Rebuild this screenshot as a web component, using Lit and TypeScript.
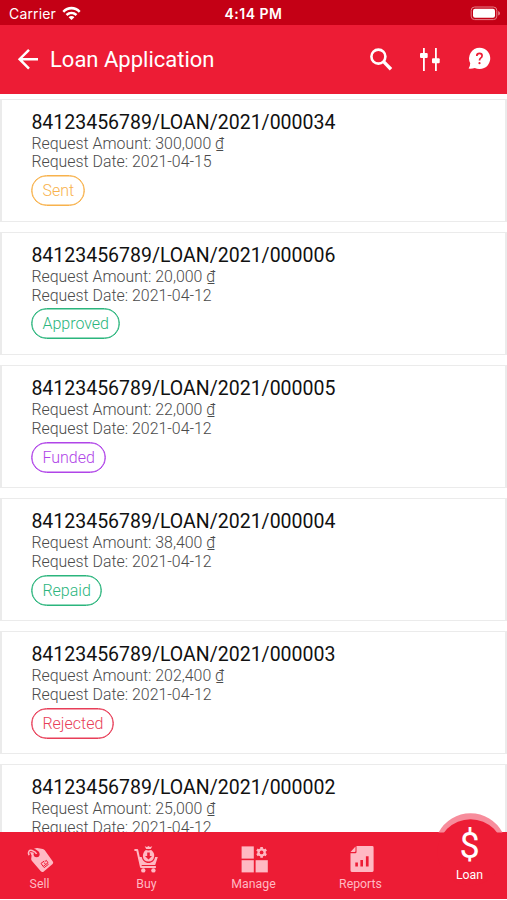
import { LitElement, html, svg, css } from "lit";
import { customElement, property } from "lit/decorators.js";
import { classMap } from "lit/directives/class-map.js";

type Status = "Sent" | "Approved" | "Funded" | "Repaid" | "Rejected";

interface Loan {
  id: string;
  amount: string;
  date: string;
  status: Status;
}

const loans: Loan[] = [
  { id: "84123456789/LOAN/2021/000034", amount: "300,000", date: "2021-04-15", status: "Sent" },
  { id: "84123456789/LOAN/2021/000006", amount: "20,000", date: "2021-04-12", status: "Approved" },
  { id: "84123456789/LOAN/2021/000005", amount: "22,000", date: "2021-04-12", status: "Funded" },
  { id: "84123456789/LOAN/2021/000004", amount: "38,400", date: "2021-04-12", status: "Repaid" },
  { id: "84123456789/LOAN/2021/000003", amount: "202,400", date: "2021-04-12", status: "Rejected" },
  { id: "84123456789/LOAN/2021/000002", amount: "25,000", date: "2021-04-12", status: "Repaid" },
];

const gearTeeth = [0, 60, 120].map(
  (a) => svg`<rect x="19.7" y="0.6" width="2.6" height="10.8" transform="rotate(${a} 21 6)" />`
);

const tabs = [
  {
    label: "Sell",
    icon: svg`
      <path d="M3.4 4.6 L5.6 9.6 L5.2 13 Q5.2 14 6 15 L14.8 25.2 Q16.2 26.6 17.8 25.4 L26.6 18 Q27.8 16.8 26.8 15.4 L18.8 4.2 Q18 3.2 16.8 3 L11.4 2 Q9.8 1.8 8.8 2.6 Z"/>
      <path class="cut wide" d="M2.6 4 C6 3.6 9 4.4 11.2 7"/>
      <circle class="hole" cx="10.6" cy="8.2" r="3"/>
      <path class="line" d="M3 9.2 C1.6 5.6 3.4 3.6 6 4.4 C8.4 5.2 10 6.4 10.6 8"/>
      <path class="mark" d="M18.2 15 L15 17.4 L17.2 20.4 L19.6 18.6 L18.2 16.6 M19.6 18.6 L22 16.8 L20.4 14.4 L18.8 15.6 M17.2 20.4 L18.2 21.6 L22.6 18.2"/>`,
  },
  {
    label: "Buy",
    icon: svg`
      <path class="line thick" d="M1.4 4 H4.2 L8 21.1 H22.9"/>
      <path d="M5.8 11 H8.7 C9.4 14.6 12 17 15.5 17 C18.9 17 21.6 14.7 22.1 11 H24.8 L22.2 18.9 H7.6Z"/>
      <path fill-rule="evenodd" d="M12.8 3.9 L15.4 4.4 L18.2 3.9 C20.7 5.6 21.4 8 21.2 10 C20.8 13.8 18.8 15.6 15.5 15.6 C12.2 15.6 10.2 13.8 9.9 10.6 C9.7 8 10.7 5.4 12.8 3.9Z M14.2 6.5 V10 H12 L15.5 13.6 L19 10 H16.8 V6.5Z"/>
      <path d="M11.7 .3 L14 1 L15.4 .1 L17 1 L19.3 .3 L17.7 2.9 H13.2Z"/>
      <circle cx="10.3" cy="24.4" r="2.2"/><circle cx="20.4" cy="24.4" r="2.2"/>`,
  },
  {
    label: "Manage",
    icon: svg`
      <rect x="1.6" y="0.4" width="12.2" height="12.2"/>
      <rect x="1.6" y="14.2" width="12.2" height="12.2"/>
      <rect x="15.6" y="14.2" width="12.2" height="12.2"/>
      <g transform="translate(0.6 0.4)">
        <circle cx="21" cy="6" r="4.2"/>${gearTeeth}
        <circle class="hole" cx="21" cy="6" r="1.9"/>
      </g>`,
  },
  {
    label: "Reports",
    icon: svg`
      <path d="M9.5 0 H25.3 Q26.6 0 26.6 1.4 V24.6 Q26.6 26 25.3 26 H4.8 Q3.5 26 3.5 24.6 V7.2 H8.3 Q9.5 7.2 9.5 6Z"/>
      <path d="M3.5 6 L8.5 .4 V5 Q8.5 6 7.5 6Z"/>
      <path class="hole" d="M8.3 16.4 h2.6 v4 h-2.6Z M13.4 14 h2.6 v6.4 h-2.6Z M18.9 10.3 h2.7 v10.1 h-2.7Z"/>`,
  },
];

@customElement("loan-card")
class LoanCard extends LitElement {
  @property({ attribute: false }) loan!: Loan;

  static styles = css`
    :host {
      display: block;
      box-sizing: border-box;
      height: 123.1px;
      padding: 10px 30px 0 29.4px;
      background: #fff;
      border: 1.5px solid #ebebeb;
      border-left-width: 2px;
      border-right-width: 2px;
    }
    .id {
      color: #111;
      font-size: 19.5px;
      line-height: 25px;
      white-space: nowrap;
    }
    .line {
      color: #4a4a4a;
      font-size: 15.9px;
      font-weight: 300;
      line-height: 18.9px;
      white-space: nowrap;
    }
    .badge {
      display: flex;
      width: fit-content;
      align-items: center;
      box-sizing: border-box;
      height: 31px;
      margin-top: 3px;
      padding: 0 10px;
      border: 1.5px solid currentColor;
      box-shadow: inset 0 0 0 0.5px currentColor;
      border-radius: 16px;
      font-size: 16px;
      font-weight: 300;
    }
    .sent { color: #f8b24c; }
    .approved, .repaid { color: #2bb57d; }
    .funded { color: #b044e8; }
    .rejected { color: #e83e58; }
  `;

  render() {
    const { id, amount, date, status } = this.loan;
    return html`
      <div class="id">${id}</div>
      <div class="line">Request Amount: ${amount} ₫</div>
      <div class="line">Request Date: ${date}</div>
      <span class=${classMap({ badge: true, [status.toLowerCase()]: true })}>${status}</span>
    `;
  }
}

@customElement("app-root")
class AppRoot extends LitElement {
  static styles = css`
    :host {
      display: flex;
      flex-direction: column;
      height: 900px;
      overflow: hidden;
      background: #fff;
      color: #fff;
      font-family: Roboto, "Liberation Sans", sans-serif;
    }
    .status {
      display: grid;
      grid-template-columns: 1fr auto 1fr;
      align-items: center;
      flex: none;
      height: 25px;
      padding: 2px 6px 0 9px;
      box-sizing: border-box;
      background: #c40015;
      font-family: Inter, sans-serif;
      font-size: 14px;
    }
    .carrier { display: flex; align-items: center; gap: 6px; letter-spacing: 0.15px; }
    .wifi { width: 19px; height: 15px; fill: #fff; }
    .time { font-weight: 600; font-size: 14px; letter-spacing: 0.5px; margin-right: 3px; }
    .battery { justify-self: end; width: 31px; height: 15px; }
    .header {
      display: flex;
      align-items: center;
      flex: none;
      height: 68.5px;
      padding: 0 16px 0 17px;
      box-sizing: border-box;
      background: #ed1c35;
    }
    .back { width: 22px; height: 22px; }
    .title {
      flex: 1;
      margin: 0 0 0 11px;
      font-size: 22px;
      font-weight: 400;
    }
    .actions { display: flex; align-items: center; gap: 26px; }
    .actions svg { width: 23px; height: 24px; }
    .list {
      display: flex;
      flex-direction: column;
      gap: 10px;
      flex: 1;
      min-height: 0;
      padding-top: 5px;
      overflow: hidden;
    }
    loan-card { flex: none; }
    .nav {
      position: relative;
      display: grid;
      grid-template-columns: 79px 135px 79px 135px 79px;
      flex: none;
      height: 67.4px;
      margin-bottom: 0.6px;
      background: #ed1c35;
    }
    .tab {
      position: relative;
      display: flex;
      flex-direction: column;
      align-items: center;
      padding-top: 13.6px;
      color: #ffb9c3;
      font-size: 12.3px;
    }
    .icon { width: 28px; height: 28px; fill: currentColor; }
    .label { position: relative; margin-top: 2.4px; line-height: 16px; }
    .cut { fill: none; stroke: #ed1c35; stroke-width: 2; }
    .wide { stroke-width: 4; }
    .line { fill: none; stroke: currentColor; stroke-width: 1.6; }
    .thick { stroke-width: 2; stroke-linejoin: round; }
    .mark { fill: none; stroke: #ed1c35; stroke-width: 1; }
    .hole { fill: #ed1c35; }
    .bump {
      position: absolute;
      left: 0;
      top: -20px;
      width: 79px;
      height: 80px;
    }
    .active { color: #fff; padding: 0 0 0 4px; }
    .dollar {
      position: relative;
      height: 35px;
      font-size: 36px;
      line-height: 29px;
    }
    .active .label { margin-top: 0; }
  `;

  render() {
    return html`
      <div class="status">
        <div class="carrier">
          <span>Carrier</span>
          <svg class="wifi" viewBox="0 0 19 15">
            <path d="M.4 4.9 C5.5 -.5 13.5 -.5 18.6 4.9 L16.8 6.7 C12.7 2.5 6.3 2.5 2.2 6.7Z" />
            <path d="M3.6 8.1 C6.9 4.8 12.1 4.8 15.4 8.1 L13.6 9.9 C11.3 7.7 7.7 7.7 5.4 9.9Z" />
            <path d="M6.6 11.2 C8.2 9.7 10.8 9.7 12.4 11.2 L9.5 14.1Z" />
          </svg>
        </div>
        <span class="time">4:14 PM</span>
        <svg class="battery" viewBox="0 0 31 15">
          <rect x="1.2" y="1" width="25.6" height="12.6" rx="3.4" fill="none" stroke="#e57f89" stroke-width="1" />
          <rect x="3" y="2.8" width="22" height="9" rx="2" fill="#fff" />
          <path d="M28.2 5 Q30 5.7 30 7.3 Q30 8.9 28.2 9.6Z" fill="#e57f89" />
        </svg>
      </div>
      <div class="header">
        <svg class="back" viewBox="0 0 22 22" fill="none" stroke="#fff" stroke-width="2.5">
          <path d="M21 11.2 H2.5 M12 1.8 L2.6 11.2 L12 20.6" />
        </svg>
        <h1 class="title">Loan Application</h1>
        <div class="actions">
          <svg viewBox="0 0 23 24">
            <circle cx="8.4" cy="9.6" r="7" fill="none" stroke="#fff" stroke-width="2.6" />
            <path d="M13.6 14.6 L21 22.2" stroke="#fff" stroke-width="3.4" />
          </svg>
          <svg viewBox="0 0 23 24" fill="#fff">
            <rect x="4" y="1" width="1.8" height="23" />
            <rect x="1" y="6" width="7.7" height="5" rx="1" />
            <rect x="16" y="1" width="1.8" height="23" />
            <rect x="13" y="11.3" width="7.7" height="5" rx="1" />
          </svg>
          <svg viewBox="0 0 23 24">
            <path d="M11.6 .7 A10.7 10.7 0 1 1 6.8 21 Q4 21.9 .6 21.6 Q2.3 19 2.2 16.3 A10.7 10.7 0 0 1 11.6 .7Z" fill="#fff" />
            <path d="M8.8 9 Q8.8 6.3 11.5 6.3 Q14.1 6.3 14.1 8.7 Q14.1 10.1 12.6 11.1 Q11.5 11.9 11.5 13.4" fill="none" stroke="#ed1c35" stroke-width="1.7" />
            <circle cx="11.5" cy="16.2" r="1.1" fill="#ed1c35" />
          </svg>
        </div>
      </div>
      <div class="list">${loans.map((loan) => html`<loan-card .loan=${loan}></loan-card>`)}</div>
      <div class="nav">
        ${tabs.map(
          (tab) => html`
            <div class="tab">
              <svg class="icon" viewBox="0 0 28 28">${tab.icon}</svg>
              <span class="label">${tab.label}</span>
            </div>
          `
        )}
        <div class="tab active">
          <svg class="bump" viewBox="0 0 79 80">
            <path d="M10.5 20.5 A36.2 36.2 0 0 1 74.5 20.5Z" fill="#f78d9c" />
            <circle cx="42.5" cy="40.2" r="33" fill="#ed1c35" />
          </svg>
          <span class="dollar">$</span>
          <span class="label">Loan</span>
        </div>
      </div>
    `;
  }
}
